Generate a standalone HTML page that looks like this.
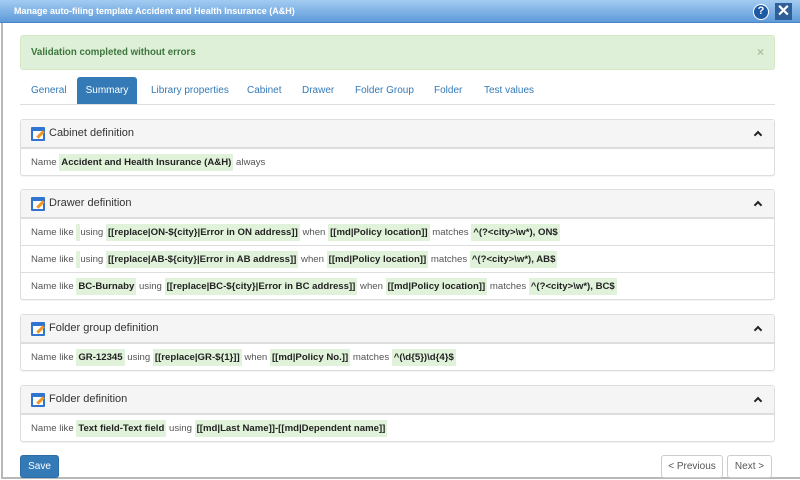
<!DOCTYPE html>
<html><head><meta charset="utf-8"><style>
*{box-sizing:border-box;margin:0;padding:0}
body{width:800px;height:480px;overflow:hidden;background:#fff;font-family:"Liberation Sans",Arial,sans-serif;position:relative;font-size:10px;color:#555}
.frame{position:absolute;left:1px;top:0;width:799px;height:479px;border-left:2px solid #b8b8b8;border-bottom:2px solid #b8b8b8}
.title{position:absolute;left:0;top:0;width:800px;height:23px;background:linear-gradient(#a3cbf2,#5e9bd9);border-bottom:1px solid #4a86c5;color:#fff;font-weight:bold;font-size:9px;line-height:23px;padding-left:14px}
.help{position:absolute;left:753px;top:4px;width:16px;height:16px;border-radius:50%;background:#1d5aa3;border:1.5px solid #fff;color:#fff;font-weight:bold;font-size:11px;text-align:center;line-height:13px}
.close{position:absolute;left:775px;top:3px;width:17px;height:17px;background:#2f5f99;color:#fff;font-weight:bold;font-size:16px;text-align:center;line-height:17px}
.alert{position:absolute;left:20px;top:35px;width:755px;height:35px;background:#dff0d8;border:1px solid #d6e9c6;border-radius:3px;color:#3c763d;font-weight:bold;line-height:33px;padding-left:10px;font-size:9.7px}
.alert span{position:absolute;right:10px;top:0;color:#a9c3a2;font-size:12px}
.tabs{position:absolute;left:20px;top:104px;width:755px;border-top:1px solid #ddd}
.tab{position:absolute;top:77px;height:27px;line-height:27px;color:#337ab7;font-size:10px}
.tab.active{background:#337ab7;color:#fff;border-radius:3px 3px 0 0;width:60px;text-align:center;left:77px}
.panel{position:absolute;left:20px;width:755px;border:1px solid #ddd;border-radius:3px;background:#fff;box-shadow:0 1px 1px rgba(0,0,0,.05)}
.ph{height:28px;background:#f5f5f5;border-bottom:1px solid #ddd;line-height:27px;padding-left:28px;font-size:11px;color:#333;position:relative}
.ph .ic{position:absolute;left:10px;top:7px;width:14px;height:14px;border:2px solid #2e74d0;border-top-width:4px;border-radius:1px;background:#fff}
.ph .ic:after{content:"";position:absolute;left:3px;top:2px;width:9px;height:3px;background:#f0961e;transform:rotate(-45deg)}
.ph .chev{position:absolute;right:13px;top:12px;width:6px;height:6px;border-left:2.5px solid #222;border-top:2.5px solid #222;transform:rotate(45deg)}
.row{height:27px;line-height:27px;padding-left:10px;border-top:1px solid #ddd;white-space:nowrap;font-size:9.6px}
.row:first-of-type{border-top:none}
b{font-weight:bold;color:#222;background:#e1f2da;padding:3px 2px}
.e{background:#e1f2da;padding:3px 2px}
.btn{position:absolute;top:455px;height:23px;line-height:21px;font-size:10px;border-radius:3px;text-align:center}
</style></head><body>
<div class="frame"></div>
<div class="title">Manage auto-filing template Accident and Health Insurance (A&amp;H)</div>
<div class="help">?</div><div class="close">✕</div>
<div class="alert">Validation completed without errors<span>×</span></div>
<div class="tabs"></div>
<div class="tab" style="left:31px">General</div>
<div class="tab active">Summary</div>
<div class="tab" style="left:151px">Library properties</div>
<div class="tab" style="left:247px">Cabinet</div>
<div class="tab" style="left:302px">Drawer</div>
<div class="tab" style="left:355px">Folder Group</div>
<div class="tab" style="left:434px">Folder</div>
<div class="tab" style="left:484px">Test values</div>

<div class="panel" style="top:119px"><div class="ph"><i class="ic"></i>Cabinet definition<span class="chev"></span></div>
<div class="row">Name <b>Accident and Health Insurance (A&amp;H)</b> always</div></div>

<div class="panel" style="top:189px"><div class="ph"><i class="ic"></i>Drawer definition<span class="chev"></span></div>
<div class="row">Name like <span class="e"></span> using <b>[[replace|ON-${city}|Error in ON address]]</b> when <b>[[md|Policy location]]</b> matches <b>^(?&lt;city&gt;\w*), ON$</b></div>
<div class="row">Name like <span class="e"></span> using <b>[[replace|AB-${city}|Error in AB address]]</b> when <b>[[md|Policy location]]</b> matches <b>^(?&lt;city&gt;\w*), AB$</b></div>
<div class="row">Name like <b>BC-Burnaby</b> using <b>[[replace|BC-${city}|Error in BC address]]</b> when <b>[[md|Policy location]]</b> matches <b>^(?&lt;city&gt;\w*), BC$</b></div></div>

<div class="panel" style="top:314px"><div class="ph"><i class="ic"></i>Folder group definition<span class="chev"></span></div>
<div class="row">Name like <b>GR-12345</b> using <b>[[replace|GR-${1}]]</b> when <b>[[md|Policy No.]]</b> matches <b>^(\d{5})\d{4}$</b></div></div>

<div class="panel" style="top:385px"><div class="ph"><i class="ic"></i>Folder definition<span class="chev"></span></div>
<div class="row">Name like <b>Text field-Text field</b> using <b>[[md|Last Name]]-[[md|Dependent name]]</b></div></div>

<div class="btn" style="left:20px;width:39px;background:#337ab7;border:1px solid #2e6da4;color:#fff">Save</div>
<div class="btn" style="left:661px;width:62px;border:1px solid #ccc;color:#555">&lt; Previous</div>
<div class="btn" style="left:727px;width:45px;border:1px solid #ccc;color:#555">Next &gt;</div>
</body></html>
